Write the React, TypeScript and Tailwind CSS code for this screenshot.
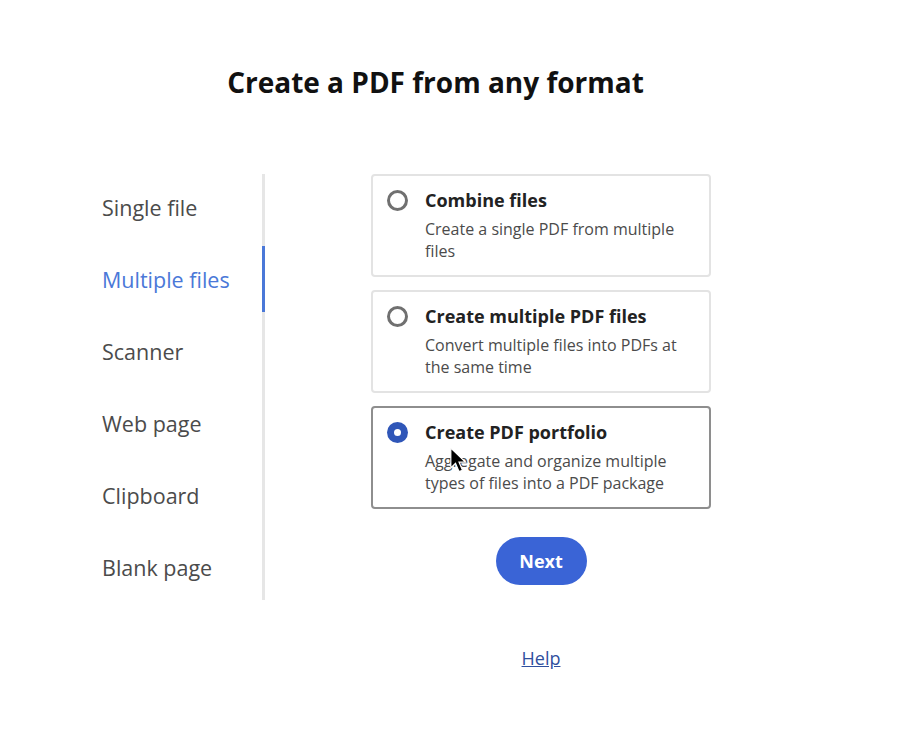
import React from "react";

const navItems = ["Single file", "Multiple files", "Scanner", "Web page", "Clipboard", "Blank page"];

const options = [
  { title: "Combine files", desc: ["Create a single PDF from multiple", "files"], selected: false },
  { title: "Create multiple PDF files", desc: ["Convert multiple files into PDFs at", "the same time"], selected: false },
  { title: "Create PDF portfolio", desc: ["Aggregate and organize multiple", "types of files into a PDF package"], selected: true },
];

function Radio({ selected }: { selected: boolean }) {
  if (selected) {
    return (
      <div className="w-[21px] h-[21px] rounded-full bg-[#2f56b8] flex items-center justify-center shrink-0">
        <div className="w-[7px] h-[7px] rounded-full bg-white" />
      </div>
    );
  }
  return <div className="w-[21px] h-[21px] rounded-full border-[3px] border-[#707070] shrink-0" />;
}

export default function App() {
  return (
    <div className="w-[912px] h-[729px] bg-white font-['Open_Sans',sans-serif] text-[#4b4b4b]">
      <div className="w-[871px] text-center pt-[62px] text-[28px] leading-[40px] font-bold text-[#111]">
        Create a PDF from any format
      </div>
      <div className="flex mt-[70px] pl-[102px]">
        <div className="w-[160px] flex flex-col">
          {navItems.map((n, i) => (
            <div
              key={n}
              className={
                i === 1
                  ? "h-[72px] flex items-center text-[21.5px] text-[#4a78d8]"
                  : "h-[72px] flex items-center text-[21.5px] text-[#4b4b4b]"
              }
            >
              {n}
            </div>
          ))}
        </div>
        <div className="w-[3px] mt-[2px] h-[426px] bg-[#e6e6e6] flex flex-col">
          <div className="mt-[72px] h-[66px] bg-[#4a78d8]" />
        </div>
        <div className="ml-[106px] mt-[2px] w-[340px] flex flex-col">
          <div className="flex flex-col gap-[13px]">
            {options.map((o) => (
              <div
                key={o.title}
                className={
                  o.selected
                    ? "relative rounded-[4px] border-2 border-[#8e8e8e] pl-[14px] pt-[11px] pb-[13px] flex gap-[17px]"
                    : "relative rounded-[4px] border-2 border-[#e3e3e3] pl-[14px] pt-[11px] pb-[13px] flex gap-[17px]"
                }
              >
                <div className="h-[26px] flex items-center">
                  <Radio selected={o.selected} />
                </div>
                <div className="flex flex-col">
                  <div className="text-[18px] leading-[26px] font-bold text-[#222]">{o.title}</div>
                  <div className="mt-[5px] text-[16px] leading-[22px] text-[#4b4b4b]">
                    {o.desc.map((d) => (
                      <div key={d}>{d}</div>
                    ))}
                  </div>
                </div>
                {o.selected && (
                  <svg
                    className="absolute left-[76px] top-[39px]"
                    width="20"
                    height="28"
                    viewBox="0 0 16 24"
                  >
                    <path d="M1 1 L1 18 L5 14 L8 21 L11 20 L8 13 L13.5 13 Z" fill="#000" stroke="#fff" strokeWidth="1" />
                  </svg>
                )}
              </div>
            ))}
          </div>
          <div className="flex justify-center mt-[28px]">
            <button className="w-[91px] h-[48px] rounded-full bg-[#3a64d6] text-white text-[18px] font-bold">
              Next
            </button>
          </div>
          <div className="flex justify-center mt-[61px]">
            <a className="text-[18px] leading-[24px] text-[#2f4f9e] underline">Help</a>
          </div>
        </div>
      </div>
    </div>
  );
}
